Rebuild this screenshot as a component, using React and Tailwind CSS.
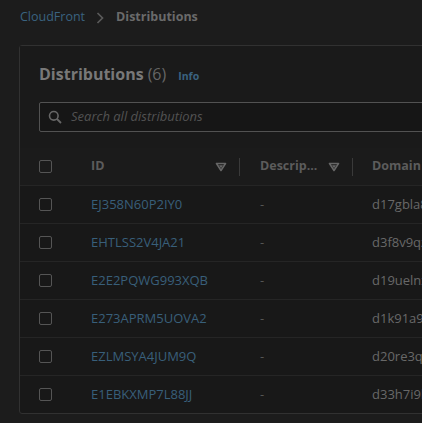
import React from 'react'

const rows = [
  { id: 'EJ358N60P2IY0', domain: 'd17gbla8xk2f1.cloudfront.net' },
  { id: 'EHTLSS2V4JA21', domain: 'd3f8v9qz1m0a7.cloudfront.net' },
  { id: 'E2E2PQWG993XQB', domain: 'd19uelnx4w8c2.cloudfront.net' },
  { id: 'E273APRM5UOVA2', domain: 'd1k91a9p0r3s6.cloudfront.net' },
  { id: 'EZLMSYA4JUM9Q', domain: 'd20re3qj7t5b4.cloudfront.net' },
  { id: 'E1EBKXMP7L88JJ', domain: 'd33h7i9lk6n2e.cloudfront.net' },
]

function SortIcon() {
  return (
    <svg width="12" height="10" viewBox="0 0 12 10" className="shrink-0">
      <path d="M1.5 1.5h9L6 8.5z" fill="none" stroke="#666666" strokeWidth="1.6" strokeLinejoin="round" />
      <path d="M4 3.2h4L6 6.3z" fill="#666666" />
    </svg>
  )
}

function Checkbox() {
  return <div className="w-[13px] h-[13px] border border-[#555555] rounded-[2px] shrink-0" />
}

export default function App() {
  return (
    <div
      className="w-[422px] h-[423px] overflow-hidden bg-[#1c1c1c]"
      style={{ fontFamily: '"Open Sans", "Noto Sans", sans-serif' }}
    >
      {/* Breadcrumb */}
      <div className="h-[35px] flex items-center pl-[20px] text-[12.5px]">
        <span className="text-[#3a6380]">CloudFront</span>
        <svg width="10" height="14" viewBox="0 0 10 14" className="ml-[10px] mr-[11px]">
          <path d="M2.5 2L7.5 7l-5 5" fill="none" stroke="#5a5a5a" strokeWidth="1.7" />
        </svg>
        <span className="text-[#6a6a6a] font-bold">Distributions</span>
      </div>

      <div className="mt-[10px] ml-[19px] w-[640px] bg-[#181818] border border-[#313131] rounded-[3px]">
        {/* Header */}
        <div className="pl-[19px] pt-[16px] pb-[16px] bg-[#1a1a1a]">
          <div className="flex items-baseline h-[24px]">
            <span className="text-[16px] font-bold text-[#787878]">Distributions</span>
            <span className="text-[16px] text-[#666666] ml-[4px]">(6)</span>
            <span className="text-[10.5px] font-bold text-[#3a6380] ml-[12px]">Info</span>
          </div>
          <div className="mt-[16px] h-[30px] border border-[#525252] rounded-[2px] bg-[#161616] flex items-center pl-[8px]">
            <svg width="14" height="14" viewBox="0 0 14 14">
              <circle cx="5.8" cy="5.8" r="4.3" fill="none" stroke="#666666" strokeWidth="1.6" />
              <path d="M9 9l4 4" stroke="#666666" strokeWidth="1.8" />
            </svg>
            <span className="ml-[9px] text-[13px] italic text-[#525252]">Search all distributions</span>
          </div>
        </div>

        {/* Table header */}
        <div className="h-[37px] flex items-center bg-[#1b1b1b] text-[12.5px] font-bold text-[#5c5c5c]">
          <div className="w-[51px] pl-[19px] flex items-center">
            <Checkbox />
          </div>
          <div className="w-[168px] pl-[20px] pr-[12px] flex items-center justify-between">
            <span>ID</span>
            <SortIcon />
          </div>
          <div className="w-px h-[18px] bg-[#3a3a3a]" />
          <div className="w-[112px] pl-[20px] pr-[12px] flex items-center justify-between">
            <span>Descrip...</span>
            <SortIcon />
          </div>
          <div className="w-px h-[18px] bg-[#3a3a3a]" />
          <div className="pl-[19px] whitespace-nowrap">Domain name</div>
        </div>

        {/* Rows */}
        {rows.map((r) => (
          <div key={r.id} className="h-[38px] flex items-center border-t border-[#252525] text-[13px]">
            <div className="w-[51px] pl-[19px] flex items-center">
              <Checkbox />
            </div>
            <div className="w-[169px] pl-[20px] text-[#385f7a]">{r.id}</div>
            <div className="w-[113px] pl-[20px] text-[#555555]">-</div>
            <div className="pl-[19px] text-[#686868] whitespace-nowrap">{r.domain}</div>
          </div>
        ))}
      </div>
    </div>
  )
}
